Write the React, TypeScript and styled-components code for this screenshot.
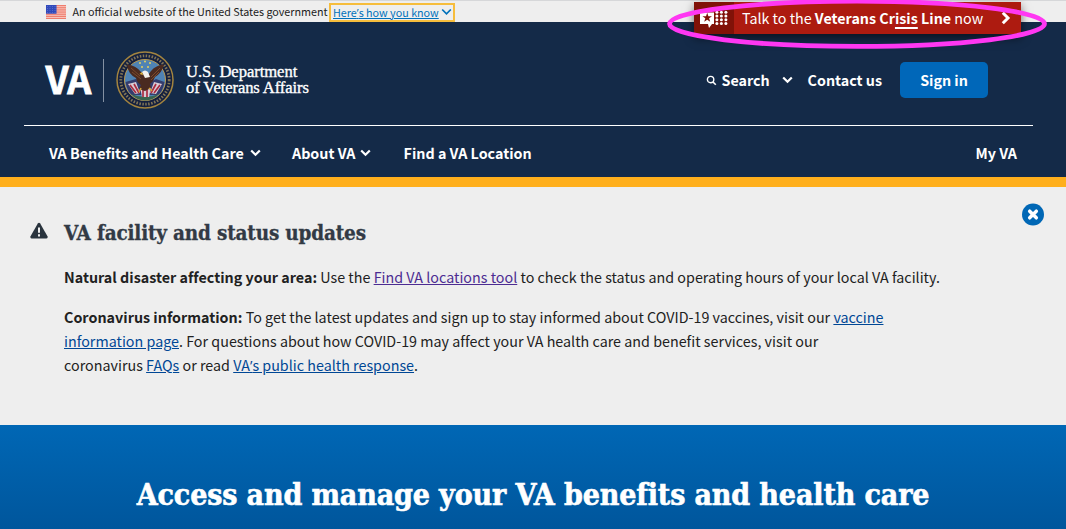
import React from 'react';
import styled, { createGlobalStyle, css } from 'styled-components';

const sans = `"Noto Sans CJK SC", "Open Sans", sans-serif`;
const slab = `"DejaVu Serif Condensed", "DejaVu Serif", serif`;

const GlobalStyle = createGlobalStyle`
  *, *::before, *::after { box-sizing: border-box; }
  html, body { margin: 0; height: 100%; }
  body { font-family: ${sans}; color: #212121; background: #fff; overflow: hidden; }
`;

const Page = styled.div`
  position: relative;
  width: 1066px;
  height: 529px;
  overflow: hidden;
  display: flex;
  flex-direction: column;
`;

type TextProps = { $size?: number; $spacing?: number; $bold?: boolean };
const Text = styled.span<TextProps>`
  white-space: nowrap;
  font-size: ${p => p.$size ?? 14.3}px;
  letter-spacing: ${p => p.$spacing ?? 0}px;
  ${p => p.$bold && css`font-weight: 700;`}
`;
const Apostrophe = styled.span`
  font-family: "Open Sans", sans-serif;
  line-height: 1;
`;

const OfficialBar = styled.div`
  flex: none;
  height: 22px;
  border-top: 1px solid #d6d7d9;
  background: #eee;
  display: flex;
  align-items: center;
  padding: 1px 0 0 46px;
  line-height: 18px;
`;
const FlagIcon = styled.svg`margin-right: 6.5px;`;
const KnowButton = styled.a`
  display: flex;
  align-items: center;
  width: 126px;
  height: 19px;
  margin-left: 1.5px;
  padding: 0 2px;
  border: 2px solid #f6bd3c;
  color: #0071bb;
  text-decoration: underline;
  line-height: 15px;
`;

const Header = styled.header`
  flex: none;
  height: 165px;
  background: #142a48;
  border-bottom: 10px solid #ffaf1c;
  color: #fff;
`;
const Masthead = styled.div`
  height: 104px;
  margin: 0 33px 0 24px;
  border-bottom: 1px solid #fff;
  display: flex;
  align-items: flex-start;
`;
const Wordmark = styled.div`
  display: flex;
  align-items: center;
  height: 60px;
  margin: 28px 0 0 21px;
`;
const VaMark = styled.span`
  font: 700 37.5px/55px ${sans};
  height: 60px;
  letter-spacing: -0.8px;
  width: 58px;
  padding-left: 0.5px;
  -webkit-text-stroke: 0.8px #fff;
`;
const Divider = styled.span`
  width: 1px;
  height: 43px;
  background: #8390a2;
`;
const Seal = styled.svg`margin-left: 12px;`;
const Agency = styled.div`
  margin-left: 12px;
  font: 16.6px/16px "Liberation Serif", serif;
  white-space: nowrap;
  -webkit-text-stroke: 0.35px #fff;
`;
const AgencyLine = styled.span<{ $spacing: number }>`
  display: block;
  letter-spacing: ${p => p.$spacing}px;
`;
const Tools = styled.div`
  display: flex;
  align-items: center;
  height: 36px;
  margin: 40px 45px 0 auto;
  line-height: 20px;
`;
const SearchButton = styled.span`
  display: flex;
  align-items: center;
  width: 102px;
`;
const SearchIcon = styled.svg`margin-right: 5px;`;
const SignIn = styled.a`
  display: flex;
  align-items: center;
  justify-content: center;
  width: 88px;
  height: 36px;
  margin-left: 18px;
  border-radius: 5px;
  background: #0067b9;
`;
const Nav = styled.nav`
  height: 51px;
  display: flex;
  align-items: center;
  padding: 2px 49px 0;
`;
const NavItem = styled.span<{ $width?: number }>`
  display: flex;
  align-items: center;
  ${p => p.$width ? css`width: ${p.$width}px;` : css`margin-left: auto;`}
`;

const CrisisLine = styled.a`
  position: absolute;
  left: 694px;
  top: 2px;
  width: 327px;
  height: 32px;
  display: flex;
  align-items: center;
  background: #ad1b10;
  color: #fff;
  line-height: 20px;
  box-shadow: 0 4px 9px rgba(0, 0, 0, 0.55);
  ${Text} { padding-bottom: 1px; }
`;
const CrisisIcon = styled.span`
  width: 40px;
  height: 32px;
  background: #811208;
  margin-right: 8px;
`;
const Under = styled.span`
  text-decoration: underline;
  text-decoration-thickness: 2px;
  text-underline-offset: 3.4px;
`;
const Ring = styled.svg`
  position: absolute;
  left: 660px;
  top: 0;
`;

const Notice = styled.section`
  flex: none;
  height: 238px;
  background: #eee;
  display: flex;
  align-items: flex-start;
  padding: 0 22px 0 29px;
`;
const WarningIcon = styled.svg`
  flex: none;
  margin: 35px 15px 0 0;
`;
const NoticeBody = styled.div`flex: 1;`;
const NoticeTitle = styled.h2`
  margin: 31px 0 17px;
  font: 700 20.5px/30px ${slab};
  letter-spacing: -0.18px;
  color: #323a45;
  -webkit-text-stroke: 0.3px #323a45;
  white-space: nowrap;
`;
const Paragraph = styled.p`
  margin: 0 0 16px;
  font-size: 14.3px;
  line-height: 24px;
  letter-spacing: 0.012px;
`;
const Line = styled.span`
  display: block;
  white-space: nowrap;
`;
const Link = styled.a<{ $visited?: boolean }>`
  color: ${p => (p.$visited ? '#4c2c92' : '#004795')};
  text-decoration: underline;
`;
const CloseIcon = styled.svg`
  flex: none;
  margin-top: 16px;
`;

const Hero = styled.section`
  flex: 1;
  background: linear-gradient(#0067b5, #00569c);
  text-align: center;
`;
const HeroTitle = styled.h1`
  margin: 50px 0 0;
  font: 700 30px/40px ${slab};
  letter-spacing: -0.13px;
  color: #fff;
  -webkit-text-stroke: 0.6px #fff;
  white-space: nowrap;
`;

const ChevronIcon = styled.svg<{ $gap: number }>`
  flex: none;
  margin: 0 0 0 ${p => p.$gap}px;
`;
const Chevron = ({ stroke = 2.2, color = '#fff', gap = 6 }: { stroke?: number; color?: string; gap?: number }) => (
  <ChevronIcon $gap={gap} width="11" height="8" viewBox="0 0 11 8">
    <path d="M1.2 1.5L5.5 5.8L9.8 1.5" fill="none" stroke={color} strokeWidth={stroke} />
  </ChevronIcon>
);
const ArrowIcon = styled.svg`margin-left: 18px;`;

const cantonStars = [0, 1, 2, 3].flatMap(r => [0, 1, 2, 3].map(c => [1.5 + c * 2.5, 1.4 + r * 2]));

export default function App() {
  return (
    <Page>
      <GlobalStyle />
      <OfficialBar>
        <FlagIcon width="20" height="14" viewBox="0 0 20 14">
          <rect width="20" height="14" fill="#f9c9c0" />
          {[0, 2, 4, 6, 8, 10, 12].map(y => <rect key={y} y={y * 1.077} width="20" height="1.2" fill="#ee7d6e" />)}
          <rect width="10.5" height="8.7" fill="#3049bb" />
          {cantonStars.map(([x, y], i) => <circle key={i} cx={x} cy={y} r=".45" fill="#8c9ce0" />)}
        </FlagIcon>
        <Text $size={10.75}>An official website of the United States government</Text>
        <KnowButton><Text $size={10.75}>Here<Apostrophe>’</Apostrophe>s how you know</Text><Chevron color="#0071bb" stroke={1.7} gap={2} /></KnowButton>
      </OfficialBar>
      <Header>
        <Masthead>
          <Wordmark>
            <VaMark>VA</VaMark>
            <Divider />
            <Seal width="58" height="58" viewBox="0 0 58 58">
              <circle cx="29" cy="29" r="28" fill="#15203f" stroke="#a3843f" strokeWidth="1.5" />
              <circle cx="29" cy="29" r="24.2" fill="none" stroke="#a8935f" strokeWidth="2.8" strokeDasharray="1.5 1.5" opacity=".75" />
              <circle cx="29" cy="29" r="20.5" fill="#4f83b4" stroke="#b99b53" strokeWidth="1" />
              <path d="M9.5 31L20 28L29 34L40 28L48.5 31Q47 40 42 44H16Q11 40 9.5 31Z" fill="#343c6d" />
              <path d="M15 43Q29 49 43 43Q37 49.5 29 49.5Q21 49.5 15 43Z" fill="#39634f" />
              <path d="M12 33L20 31L24 42L19 43ZM46 33L38 31L34 42L40 43ZM24 36H35L33 46H26Z" fill="#d9ccd5" />
              <path d="M14 34L20 42M18 33L23 42M44 34L38 42M40 33L35 42M27 38V46M31 38V46" stroke="#aa2b41" strokeWidth="1.7" fill="none" />
              <path d="M11 13.5Q12 23 20 27Q21 32 25 34L23 38L29 40L35 37L34 33Q38 30 39 26Q46 22 48 13.5Q40 14 35 20L32 24L26 22Q20 14 11 13.5Z" fill="#4a2a20" />
              <path d="M15 17L24 25M16 21L25 28M44 17L35 26M43 21L35 29" stroke="#7c4a2c" strokeWidth="1" />
              <path d="M26 21Q29 18 32 21L34 26L29 27Z" fill="#f4f1ec" />
              <path d="M26 21L23.5 23L27 24Z" fill="#e2b43c" />
              <path d="M25 37L23 41M33 37L36 40" stroke="#d3a13a" strokeWidth="1.6" />
              {[[24, 12], [29, 10.5], [34, 12], [26, 16], [32, 16]].map(([x, y]) => <circle key={`${x}-${y}`} cx={x} cy={y} r="1" fill="#e6d25b" />)}
            </Seal>
            <Agency>
              <AgencyLine $spacing={-0.05}>U.S. Department</AgencyLine>
              <AgencyLine $spacing={-0.1}>of Veterans Affairs</AgencyLine>
            </Agency>
          </Wordmark>
          <Tools>
            <SearchButton>
              <SearchIcon width="11" height="11" viewBox="0 0 11 11">
                <circle cx="4.6" cy="4.6" r="3.2" fill="none" stroke="#fff" strokeWidth="1.4" />
                <path d="M7 7L9.8 9.8" stroke="#fff" strokeWidth="1.6" />
              </SearchIcon>
              <Text $bold>Search</Text><Chevron gap={12} />
            </SearchButton>
            <Text $bold>Contact us</Text>
            <SignIn><Text $bold>Sign in</Text></SignIn>
          </Tools>
        </Masthead>
        <Nav>
          <NavItem $width={243}><Text $bold>VA Benefits and Health Care</Text><Chevron /></NavItem>
          <NavItem $width={111.6}><Text $bold>About VA</Text><Chevron gap={5} /></NavItem>
          <Text $bold>Find a VA Location</Text>
          <NavItem><Text $bold>My VA</Text></NavItem>
        </Nav>
      </Header>
      <Notice>
        <WarningIcon width="20" height="18" viewBox="0 0 20 18">
          <path d="M8.8 1.4Q10 .1 11.2 1.4L18.6 14.4Q19 16.2 17.4 16.6H2.6Q1 16.2 1.4 14.4Z" fill="#29333d" />
          <path d="M10 5.5V10.7M10 12.2V14.4" stroke="#eee" strokeWidth="2" />
        </WarningIcon>
        <NoticeBody>
          <NoticeTitle>VA facility and status updates</NoticeTitle>
          <Paragraph>
            <Line><b>Natural disaster affecting your area:</b> Use the <Link $visited>Find VA locations tool</Link> to check the status and operating hours of your local VA facility.</Line>
          </Paragraph>
          <Paragraph>
            <Line><b>Coronavirus information:</b> To get the latest updates and sign up to stay informed about COVID-19 vaccines, visit our <Link>vaccine</Link></Line>
            <Line><Link>information page</Link>. For questions about how COVID-19 may affect your VA health care and benefit services, visit our</Line>
            <Line>coronavirus <Link>FAQs</Link> or read <Link>VA<Apostrophe>’</Apostrophe>s public health response</Link>.</Line>
          </Paragraph>
        </NoticeBody>
        <CloseIcon width="22" height="23" viewBox="0 0 22 23">
          <circle cx="11" cy="11.5" r="11" fill="#0067b5" />
          <path d="M7.7 8.2L14.3 14.8M14.3 8.2L7.7 14.8" stroke="#fff" strokeWidth="3.5" strokeLinecap="round" />
        </CloseIcon>
      </Notice>
      <Hero><HeroTitle>Access and manage your VA benefits and health care</HeroTitle></Hero>
      <CrisisLine>
        <CrisisIcon>
          <svg width="40" height="32" viewBox="0 0 40 32">
            <path d="M6 10.5H20V22H18L15 26L14 22H6Z" fill="#fff" />
            <path d="M13.2 10.8L14.4 14.2H18L15.1 16.3L16.2 19.8L13.2 17.7L10.2 19.8L11.3 16.3L8.4 14.2H12Z" fill="#811208" />
            {[0, 1, 2, 3].flatMap(r => [0, 1, 2].map(c => <circle key={`${r}${c}`} cx={22.9 + c * 4.5} cy={10.2 + r * 3.8} r="1.5" fill="#fff" />))}
          </svg>
        </CrisisIcon>
        <Text>Talk to the <b>Veterans Cr<Under>isis</Under> Line</b> now</Text>
        <ArrowIcon width="10" height="14" viewBox="0 0 10 14"><path d="M1.8 1.8L7 7L1.8 12.2" fill="none" stroke="#fff" strokeWidth="3" /></ArrowIcon>
      </CrisisLine>
      <Ring width="400" height="56" viewBox="0 0 400 56">
        <ellipse cx="197" cy="23.8" rx="187.5" ry="22.6" fill="none" stroke="#ff37f2" strokeWidth="4.8" />
      </Ring>
    </Page>
  );
}
